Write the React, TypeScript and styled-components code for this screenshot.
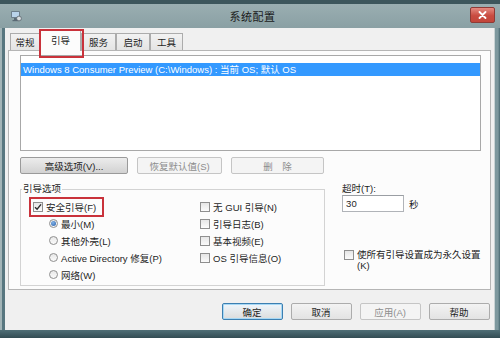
import React from "react";
import styled, { createGlobalStyle, css } from "styled-components";

const GlobalStyle = createGlobalStyle`
  html, body {
    margin: 0;
    padding: 0;
  }
  body {
    width: 500px;
    height: 338px;
    overflow: hidden;
    font-family: "Liberation Sans", "Noto Sans CJK SC", sans-serif;
    font-size: 9.5px;
    color: #1e1e1e;
  }
`;

const Window = styled.div`
  width: 500px;
  height: 338px;
  display: flex;
  flex-direction: column;
  box-sizing: border-box;
  border-top: 4px solid #3d565c;
  background: #8ca2a6;
`;

const TitleBar = styled.div`
  height: 24px;
  display: grid;
  grid-template-columns: 1fr auto 1fr;
  align-items: center;
  padding: 0 5px 0 10px;
  background: linear-gradient(#9aaeb1, #8aa0a4);
`;

const Title = styled.span`
  font-size: 11px;
  color: #1a1a1a;
  letter-spacing: 0.5px;
`;

const CloseButton = styled.div`
  justify-self: end;
  width: 23px;
  height: 14px;
  margin-top: -2px;
  display: grid;
  place-content: center;
  border: 1px solid #8e3b36;
  border-radius: 2px;
  background: linear-gradient(#e58a80, #c94b40 55%, #c2463b);
`;

const Middle = styled.div`
  flex: 1;
  display: flex;
`;

const LeftFrame = styled.div`
  width: 8px;
  background: linear-gradient(90deg, #a2b4b7 0 2px, #587780 2px 7px, #b6c4c6 7px);
`;

const RightFrame = styled.div`
  width: 10px;
  background: linear-gradient(90deg, #c9d3d5 0 1px, #7d989e 1px 4px, #466770);
`;

const BottomFrame = styled.div`
  height: 8px;
  background: linear-gradient(#4f6e76, #324c53);
`;

const Client = styled.div`
  flex: 1;
  display: flex;
  flex-direction: column;
  padding: 0 3px;
  background: #f0f0f0;
`;

const TabStrip = styled.div`
  height: 22px;
  display: flex;
  align-items: flex-end;
  padding-left: 2px;
`;

const Tab = styled.div<{ $w: number; $active?: boolean }>`
  width: ${(p) => p.$w}px;
  height: 17px;
  box-sizing: border-box;
  display: flex;
  align-items: center;
  justify-content: center;
  border: 1px solid #acacac;
  border-bottom: none;
  background: linear-gradient(#f2f2f2, #e4e4e4);
  ${(p) =>
    p.$active &&
    css`
      position: relative;
      z-index: 2;
      height: 21px;
      margin-bottom: -1px;
      padding-bottom: 3px;
      background: #fcfcfc;
      &::after {
        content: "";
        position: absolute;
        left: -2px;
        right: -4px;
        top: -2px;
        bottom: -7px;
        border: 2px solid #c9323b;
      }
    `}
`;

const Panel = styled.div`
  height: 240px;
  box-sizing: border-box;
  border: 1px solid #b5b5b5;
  background: #fcfcfc;
  padding: 4px 9px 0 11px;
`;

const ListBox = styled.div`
  height: 96px;
  box-sizing: border-box;
  border: 1px solid #a8a8a8;
  background: #ffffff;
`;

const ListItem = styled.div`
  margin-top: 7px;
  height: 13px;
  line-height: 13px;
  padding-left: 2px;
  background: #3399ff;
  color: #ffffff;
  white-space: nowrap;
`;

const ButtonRow = styled.div`
  margin-top: 6px;
  display: flex;
  gap: 9px;
`;

const Button = styled.div<{ $w: number; $variant?: "normal" | "strong" | "disabled" | "default" }>`
  width: ${(p) => p.$w}px;
  height: 17px;
  box-sizing: border-box;
  display: flex;
  align-items: center;
  justify-content: center;
  border: 1px solid #acacac;
  border-radius: 2px;
  background: linear-gradient(#f3f3f3, #e3e3e3);
  white-space: nowrap;
  ${(p) =>
    p.$variant === "strong" &&
    css`
      border-color: #9a9a9a;
      background: linear-gradient(#ececec, #d2d2d2);
    `}
  ${(p) =>
    p.$variant === "disabled" &&
    css`
      border-color: #c5c5c5;
      background: #f4f4f4;
      color: #8d8d8d;
    `}
  ${(p) =>
    p.$variant === "default" &&
    css`
      border-color: #3c7fb1;
      background: linear-gradient(#eef6fc, #dcdcdc);
      box-shadow: inset 0 0 0 1px #a7d8f5;
    `}
`;

const Lower = styled.div`
  margin-top: 9px;
  display: flex;
`;

const Group = styled.fieldset`
  width: 305px;
  height: 103px;
  box-sizing: border-box;
  margin: 0;
  padding: 0;
  border: 1px solid #d3d3d3;
  min-width: 0;
`;

const Legend = styled.legend`
  margin-left: 1px;
  padding: 0 1px;
  line-height: 12px;
`;

const Columns = styled.div`
  display: flex;
  padding: 3px 0 0 12px;
`;

const Column = styled.div<{ $w?: number }>`
  display: flex;
  flex-direction: column;
  align-items: flex-start;
  ${(p) => p.$w && `width: ${p.$w}px;`}
`;

const OptionRow = styled.label<{ $indent?: number; $marked?: boolean }>`
  height: 17px;
  display: flex;
  align-items: center;
  gap: 3px;
  padding-left: ${(p) => p.$indent ?? 0}px;
  white-space: nowrap;
  ${(p) =>
    p.$marked &&
    css`
      position: relative;
      &::after {
        content: "";
        position: absolute;
        left: -4px;
        right: -8px;
        top: -1px;
        bottom: -2px;
        border: 2px solid #c9323b;
      }
    `}
`;

const CheckBox = styled.span`
  width: 10px;
  height: 10px;
  box-sizing: border-box;
  flex: none;
  display: grid;
  place-content: center;
  border: 1px solid #8f8f8f;
  background: linear-gradient(#e6e6e6, #fbfbfb);
`;

const Radio = styled.span<{ $on?: boolean }>`
  width: 9px;
  height: 9px;
  box-sizing: border-box;
  flex: none;
  display: grid;
  place-content: center;
  border: 1px solid #8f8f8f;
  border-radius: 50%;
  background: linear-gradient(#e8e8e8, #fbfbfb);
  ${(p) =>
    p.$on &&
    css`
      &::before {
        content: "";
        width: 5px;
        height: 5px;
        border-radius: 50%;
        background: radial-gradient(circle at 40% 35%, #7fb2e8, #2b5fa8);
      }
    `}
`;

const Side = styled.div`
  margin-left: 17px;
  display: flex;
  flex-direction: column;
`;

const SideLabel = styled.div`
  height: 12px;
  line-height: 12px;
`;

const InputRow = styled.div`
  display: flex;
  align-items: center;
  gap: 5px;
`;

const NumberBox = styled.div`
  width: 62px;
  height: 17px;
  box-sizing: border-box;
  display: flex;
  align-items: center;
  padding-left: 3px;
  border: 1px solid #b0b3b8;
  border-top-color: #9a9ea3;
  background: #ffffff;
`;

const PermanentRow = styled.label`
  margin-top: 37px;
  padding-left: 2px;
  display: flex;
  align-items: flex-start;
  gap: 3px;
  line-height: 11px;
  white-space: nowrap;

  & > span:first-child {
    margin-top: 1px;
  }
`;

const Footer = styled.div`
  flex: 1;
  display: flex;
  justify-content: flex-end;
  align-items: flex-start;
  gap: 8px;
  padding: 13px 1px 0 0;
`;

const Check = () => (
  <svg width="8" height="8" viewBox="0 0 8 8">
    <path d="M1 4.2 L3.1 6.3 L7 1.4" fill="none" stroke="#2b2b2b" strokeWidth="1.4" />
  </svg>
);

const AppIcon = () => (
  <svg width="12" height="12" viewBox="0 0 12 12">
    <rect x="1" y="1" width="9" height="7" rx="1" fill="#6d7f8c" />
    <rect x="2" y="2" width="7" height="5" fill="#b9d3ea" />
    <rect x="4" y="8" width="3" height="2" fill="#5a6a75" />
    <rect x="2.5" y="10" width="6" height="1.2" fill="#5a6a75" />
    <circle cx="9" cy="8.5" r="2.4" fill="#d8dde0" stroke="#59656d" strokeWidth="0.8" />
  </svg>
);

const CloseGlyph = () => (
  <svg width="9" height="8" viewBox="0 0 9 8">
    <path d="M1.5 1 L7.5 7 M7.5 1 L1.5 7" stroke="#ffffff" strokeWidth="1.8" strokeLinecap="round" />
  </svg>
);

const tabs = [
  { label: "常规", w: 30 },
  { label: "引导", w: 41, active: true },
  { label: "服务", w: 35 },
  { label: "启动", w: 34 },
  { label: "工具", w: 33 },
];

const radios = [
  { label: "最小(M)", on: true },
  { label: "其他外壳(L)" },
  { label: "Active Directory 修复(P)" },
  { label: "网络(W)" },
];

const extras = ["无 GUI 引导(N)", "引导日志(B)", "基本视频(E)", "OS 引导信息(O)"];

export default function App() {
  return (
    <>
      <GlobalStyle />
      <Window>
        <TitleBar>
          <AppIcon />
          <Title>系统配置</Title>
          <CloseButton>
            <CloseGlyph />
          </CloseButton>
        </TitleBar>
        <Middle>
          <LeftFrame />
          <Client>
            <TabStrip>
              {tabs.map((t) => (
                <Tab key={t.label} $w={t.w} $active={t.active}>
                  {t.label}
                </Tab>
              ))}
            </TabStrip>
            <Panel>
              <ListBox>
                <ListItem>Windows 8 Consumer Preview (C:\Windows) : 当前 OS; 默认 OS</ListItem>
              </ListBox>
              <ButtonRow>
                <Button $w={108} $variant="strong">高级选项(V)...</Button>
                <Button $w={85} $variant="disabled">恢复默认值(S)</Button>
                <Button $w={93} $variant="disabled">删　除</Button>
              </ButtonRow>
              <Lower>
                <Group>
                  <Legend>引导选项</Legend>
                  <Columns>
                    <Column $w={167}>
                      <OptionRow $marked>
                        <CheckBox>
                          <Check />
                        </CheckBox>
                        安全引导(F)
                      </OptionRow>
                      {radios.map((r) => (
                        <OptionRow key={r.label} $indent={16}>
                          <Radio $on={r.on} />
                          {r.label}
                        </OptionRow>
                      ))}
                    </Column>
                    <Column>
                      {extras.map((e) => (
                        <OptionRow key={e}>
                          <CheckBox />
                          {e}
                        </OptionRow>
                      ))}
                    </Column>
                  </Columns>
                </Group>
                <Side>
                  <SideLabel>超时(T):</SideLabel>
                  <InputRow>
                    <NumberBox>30</NumberBox>
                    秒
                  </InputRow>
                  <PermanentRow>
                    <CheckBox />
                    <span>
                      使所有引导设置成为永久设置
                      <br />
                      (K)
                    </span>
                  </PermanentRow>
                </Side>
              </Lower>
            </Panel>
            <Footer>
              <Button $w={61} $variant="default">确定</Button>
              <Button $w={61}>取消</Button>
              <Button $w={61} $variant="disabled">应用(A)</Button>
              <Button $w={61}>帮助</Button>
            </Footer>
          </Client>
          <RightFrame />
        </Middle>
        <BottomFrame />
      </Window>
    </>
  );
}
